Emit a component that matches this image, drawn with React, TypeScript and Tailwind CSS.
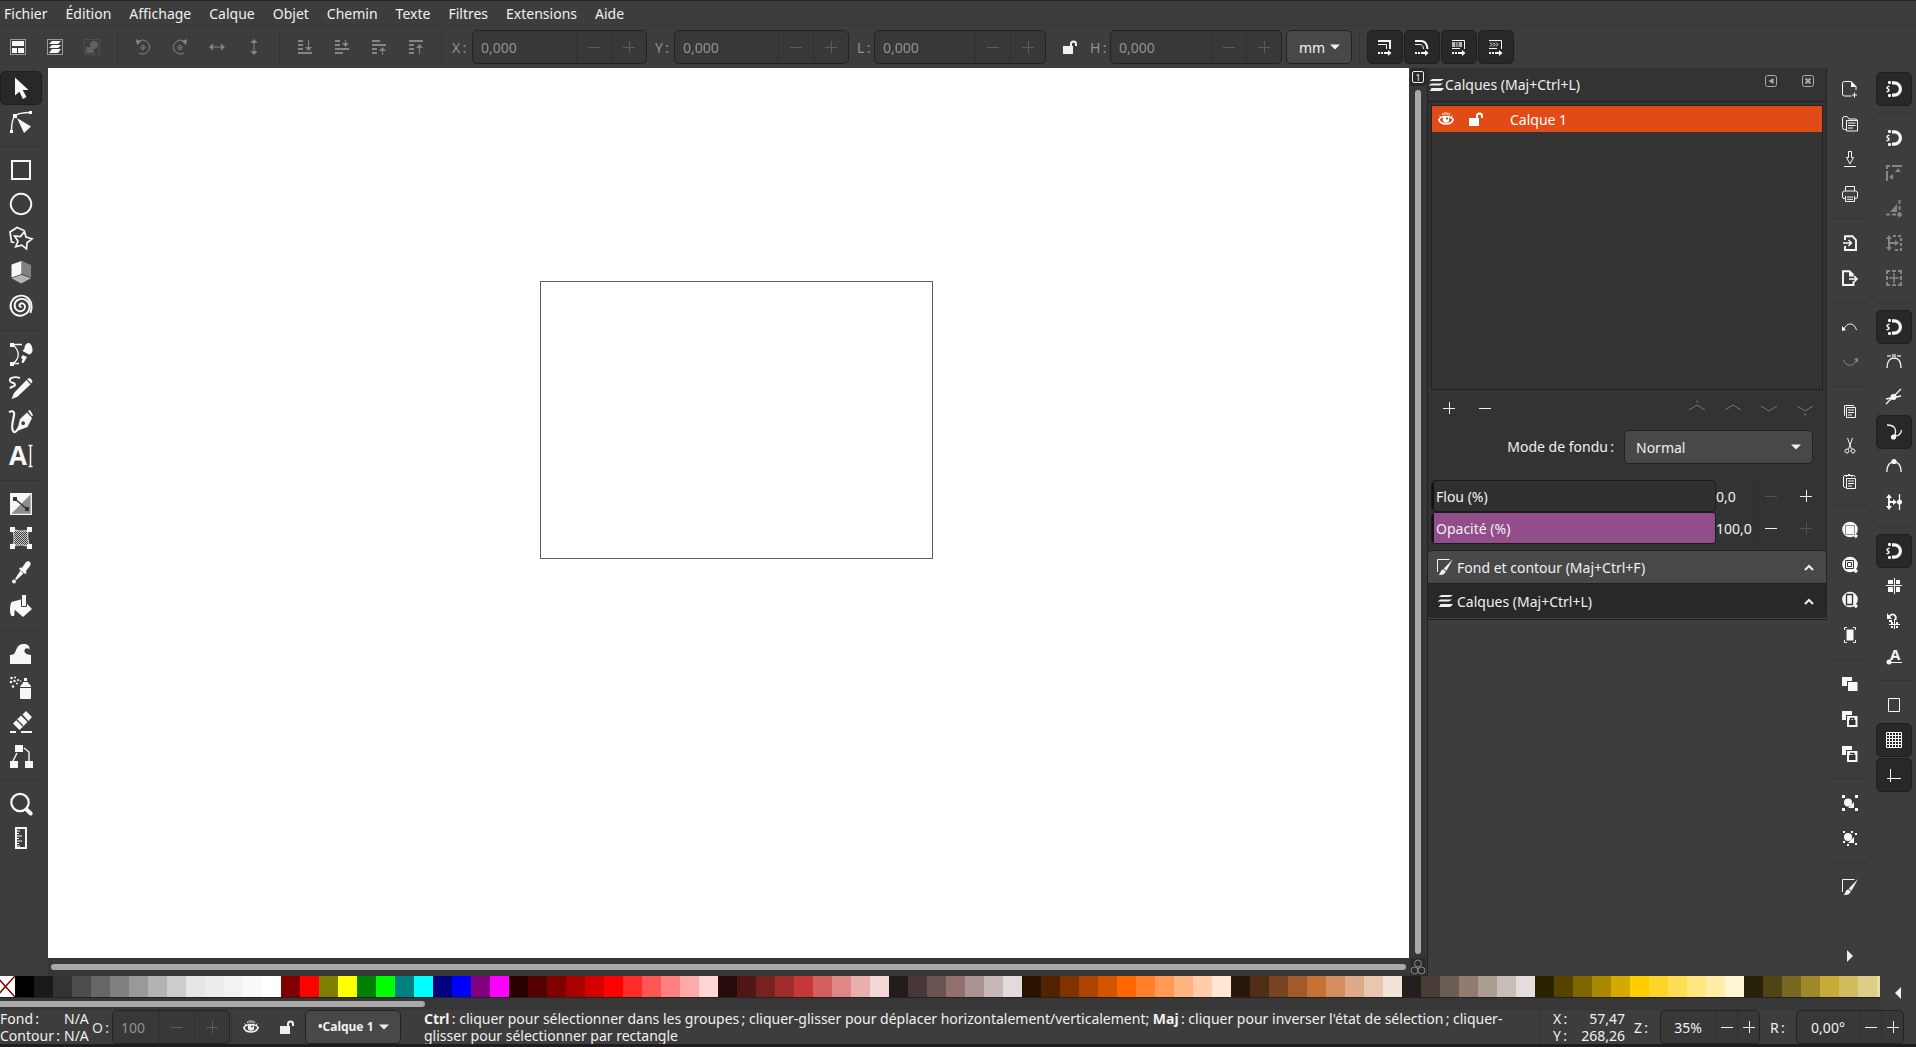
import { useState, type ReactNode } from "react";

const menus = ["Fichier", "Édition", "Affichage", "Calque", "Objet", "Chemin", "Texte", "Filtres", "Extensions", "Aide"];

const palette =
  "000000 1a1a1a 333333 4d4d4d 666666 808080 999999 b3b3b3 cccccc e6e6e6 ececec f2f2f2 f9f9f9 ffffff 800000 ff0000 808000 ffff00 008000 00ff00 008080 00ffff 000080 0000ff 800080 ff00ff 2b0000 550000 800000 aa0000 d40000 ff0000 ff2a2a ff5555 ff8080 ffaaaa ffd5d5 280b0b 501616 782121 a02c2c c83737 d35f5f de8787 e9afaf f4d7d7 241c1c 483737 6c5353 916f6f ac9393 c8b7b7 e3dbdb 2b1100 552200 803300 aa4400 d45500 ff6600 ff7f2a ff9955 ffb380 ffccaa ffe6d5 28170b 502d16 784421 a05a2c c87137 d38d5f deaa87 e9c6af f4e3d7 241f1c 483e37 6c5d53 917c6f ac9d93 c8beb7 e3dedb 2b2200 554400 806600 aa8800 d4aa00 ffcc00 ffd42a ffdd55 ffe680 ffeeaa fff6d5 28220b 504416 786721 a0892c c8ab37 d3bc5f decd87 e9ddaf".split(" ");

type Tool = { label: string; icon: ReactNode; on?: boolean; off?: boolean } | null;

// 16px drawings for the bars, 24px ones for the toolbox
function Svg({ size = 16, children }: { size?: number; children: ReactNode }) {
  return (
    <svg width={size} height={size} viewBox={`0 0 ${size} ${size}`} fill="currentColor" className="shrink-0 overflow-visible" aria-hidden="true">
      {children}
    </svg>
  );
}

const line = { fill: "none", stroke: "currentColor" };

const Lock = () => (
  <Svg>
    <path d="M1 7h10v8H1z" />
    <path {...line} strokeWidth="2" d="M9 8V5a2.5 2.5 0 0 1 5 0v2" />
  </Svg>
);

const Eye = () => (
  <Svg>
    <path {...line} strokeWidth="1.6" d="M.8 8.6C3 4.4 13 4.4 15.200 8.600 13 14.400 3 14.400 .8 8.600z" />
    <circle cx="8" cy="8.500" r="3.200" />
    <circle cx="9" cy="7.500" r="1" fill="#444" />
    <path {...line} d="M1.500 4.500l1.500 1.700M4.200 2.500l1 2M8 1.200v2.500M11.800 2.500l-1 2M14.500 4.500L13 6.200M6 1.500l.3 2M10 1.500l-.3 2" />
  </Svg>
);

const Layers = () => (
  <Svg>
    <path d="M5 2h11c-2 1-2 2-4 2H1.500C3.500 3 3 2 5 2zM4 6.500h11c-2 1-2 2-4 2H.5c2-1 1.500-2 3.500-2zM4 11h12c-1 1.500-2 3-4 3H1.500l1-1C3.500 12.500 2.500 11 4 11z" />
  </Svg>
);

const FillStroke = () => (
  <Svg>
    <path {...line} d="M12.500 .5H.5v12.500" />
    <path d="M16 0L6.800 9.500l2.500 2.500zM6.300 10.200l2.400 2.300C8 15.500 4.500 16 1.500 16c2.500-1.500 1.500-5 4.800-5.800z" />
  </Svg>
);

const Magnet = () => (
  <Svg>
    <path {...line} strokeWidth="3.200" d="M6 1.800h2.200a6.200 6.200 0 0 1 0 12.400H6" />
    <rect x="2" y="0" width="3" height="3" rx="1" />
    <rect x="2" y="13" width="3" height="3" rx="1" />
    <path {...line} strokeWidth="1.400" d="M3.500 5.200C0 5.500 .8 7.800 2 8c1.600.4 1.600 2.500-1.500 2.800" />
  </Svg>
);

const Caret = () => (
  <svg width="10" height="6" viewBox="0 0 10 6" fill="currentColor" className="pointer-events-none" aria-hidden="true">
    <path d="M0 .5h10L5 5.500z" />
  </svg>
);

const Chevron = () => (
  <svg width="10" height="7" viewBox="0 0 10 7" fill="none" stroke="currentColor" strokeWidth="2" aria-hidden="true">
    <path d="M1 6l4-4 4 4" />
  </svg>
);

const Stroke24 = ({ d, w = 2 }: { d: string; w?: number }) => <Svg size={24}><path {...line} strokeWidth={w} d={d} /></Svg>;
const Bar16 = ({ d, s }: { d?: string; s?: string }) => (
  <Svg>
    {d && <path d={d} />}
    {s && <path {...line} d={s} />}
  </Svg>
);

const toolbox: Tool[] = [
  { label: "Sélecteur", on: true, icon: <Svg size={24}><path d="M6 1.500L19.500 14h-5.800l3.800 7-3.600 2-3.500-7.200L6 19.500z" /></Svg> },
  {
    label: "Nœuds",
    icon: (
      <Svg size={24}>
        <path {...line} strokeWidth="1.400" d="M2.500 21.500C2.500 13 3 9 6 6S14 2.500 21.500 2.500" />
        <path d="M4 4h4v4H4zM20 1h3v3h-3zM1 20h3v3H1zM8 8l14 8.500L15 23z" />
      </Svg>
    ),
  },
  null,
  { label: "Rectangle", icon: <Stroke24 d="M3 3h18v18H3z" /> },
  { label: "Ellipse", icon: <Stroke24 d="M12 1.800a10.200 10.200 0 1 0 .01 0z" /> },
  { label: "Étoile", icon: <Stroke24 w={1.700} d="M15 4.500L8 1.500 1 6l1.500 10 3 .5M15.500 5.500l1.500 5.500 6 1.800-5 4-.5 6-4.800-3.700-6 1.700 2.300-5.800L5.500 10l6 .5z" /> },
  {
    label: "Boîte 3D",
    icon: (
      <Svg size={24}>
        <path d="M2.500 4.500L12.500 1v13L2.500 17.500z" />
        <path fill="#808080" d="M13 1l9 4v12.500L13 14z" />
        <path fill="#b4b4b4" d="M2.500 18.300l10-3.600 9.500 3.600-9.800 5.200z" />
      </Svg>
    ),
  },
  { label: "Spirale", icon: <Stroke24 w={1.900} d="M12.500 12.500c-1.500 1-3-1-1.500-2.500 2.500-1.800 5.500.5 5 3.300-.5 3.500-4.500 5-7.500 3.200-4-2.500-3.800-8.500.5-10.700 5-2.500 11 .5 11.500 6.200.4 6.500-5.500 10.500-11 9.500-6-1-9.500-7.500-7.300-13C4.500 2.500 11.500 0 17 2.800c5.500 3 7 9.700 4.500 16.200" /> },
  null,
  {
    label: "Stylo Bézier",
    icon: (
      <Svg size={24}>
        <path d="M1 1h4v4H1zM1 20h4v4H1zM15.500 6.500C15.500 3 18 .5 20 1s3.500 4 3.500 7-2.500 4.500-3.500 4.500l-6.500-3.500zM13.500 13l4.500 2-3.500 6-2-.5 1-3.500-1.500-1z" />
        <path {...line} strokeWidth="1.300" d="M4 2.500h9M4 3c7 6 7 13 0 18.500h6" />
      </Svg>
    ),
  },
  {
    label: "Crayon",
    icon: (
      <Svg size={24}>
        <path {...line} strokeWidth="1.900" d="M11 2C5 0 0 2 1 5c1 2.500 5 1 5 4 0 2-4 1-5 3.500" />
        <path d="M17.500 4l4 4.500L8 21l-5.500 2L5 17zM19 2.500c2-1.500 5.500 2 4 4L22.300 7.500 18.200 3.300z" />
      </Svg>
    ),
  },
  {
    label: "Plume calligraphique",
    icon: (
      <Svg size={24}>
        <path {...line} strokeWidth="2.200" d="M0 2c5-2 6 0 4.500 6C3 14 2 20 5 22c2 .5 3.500-2 5-5" />
        <path fillRule="evenodd" d="M8 21l3-12 7-6.500L23 8l-4.500 9zM15 11.500a1.900 1.900 0 1 0-.1 3.500 1.900 1.900 0 0 0 .1-3.500zM19 1l2-1 3 5-1 1.500z" />
      </Svg>
    ),
  },
  {
    label: "Texte",
    icon: (
      <Svg size={24}>
        <text x="0" y="21" className="font-['Open_Sans',sans-serif] text-[26px] font-bold">A</text>
        <path {...line} strokeWidth="1.500" d="M21.500 2v20M19.500 1.500h4M19.500 22.500h4" />
      </Svg>
    ),
  },
  null,
  {
    label: "Dégradé",
    icon: (
      <Svg size={24}>
        <path fill="#8c8c8c" d="M2 2h20v20H2z" />
        <path d="M2 2h20L2 22z" />
        <path {...line} strokeWidth="1.300" d="M1.700 1.700h20.600v20.600H1.700z" />
        <path fill="#333" d="M4 5h4v4H4zM16 15h4v4h-4z" />
        <path stroke="#333" strokeWidth="1.500" d="M6 7l12 10" />
      </Svg>
    ),
  },
  {
    label: "Filet",
    icon: (
      <Svg size={24}>
        <defs>
          <pattern id="mesh" width="2" height="2" patternUnits="userSpaceOnUse">
            <path fill="#c8c8c8" d="M0 0h1v1H0zM1 1h1v1H1z" />
          </pattern>
        </defs>
        <path fill="url(#mesh)" stroke="currentColor" strokeWidth=".8" d="M4 3c6 3 10 2 16 1-3 6 0 10 0 17-6-3-11-2-17-1 4-6 1-11 1-17z" />
        <path d="M1 1h5v5H1zM18 1h5v5h-5zM1 18h5v5H1zM18 18h5v5h-5z" />
      </Svg>
    ),
  },
  {
    label: "Pipette",
    icon: (
      <Svg size={24}>
        <path d="M17 2c3-2 6 1 4 4l-4 5 .5 2-1.500 1-6-5 1-1.500 2 .2zM11.500 10.500l3 3L7.500 20l-1.500-1z" />
        <circle cx="5" cy="21.500" r="2" />
      </Svg>
    ),
  },
  {
    label: "Remplissage",
    icon: (
      <Svg size={24}>
        <path d="M2.500 22c-2-2-2-11 0-14l11-3L23 15l-9 8-8-7c-1 1 0 5-1 6z" />
        <path stroke="#3d3d3d" d="M12.500 .5h5v12h-5z" />
      </Svg>
    ),
  },
  null,
  { label: "Ajuster", icon: <Svg size={24}><path d="M1 22v-9c5 0 5-3 6.500-6C9 3 12 1.500 16 2c3.500.5 5 3 4.500 5.500-2-2-4.500-1.500-5 .8C15 11 18 13 22 13v9z" /></Svg> },
  {
    label: "Aérosol",
    icon: (
      <Svg size={24}>
        <path d="M11 11c1-3 3-3 3-5h5c0 2 3 2 3 5zM11 12h11v10q0 1-1 1h-9q-1 0-1-1zM15 2h3v3h-3z" />
        <circle cx="2.500" cy="2" r="1.300" />
        <circle cx="6" cy="1.500" r="1" />
        <circle cx="2" cy="6" r="1.300" />
        <circle cx="5.500" cy="5" r="1.200" />
        <circle cx="9" cy="4" r="1.100" />
        <circle cx="11.500" cy="5" r=".8" />
        <circle cx="8" cy="7.500" r="1" />
        <circle cx="4" cy="10.500" r="1.300" />
      </Svg>
    ),
  },
  { label: "Gomme", icon: <Svg size={24}><path d="M13.500 4.500L17 1l6 6-3.500 4zM4 13.500l8-8 6.500 6.500-8 8zM1 21h6v2H1zM12 21h11v2H12z" /><path stroke="#3d3d3d" strokeWidth="1.300" d="M7.500 9.500L14 16" /></Svg> },
  {
    label: "Connecteur",
    icon: (
      <Svg size={24}>
        <path d="M6 1h8v7H6zM1 17h8v7H1zM16 17h8v7h-8z" />
        <path {...line} strokeWidth="1.400" d="M8 9l-4 8M15 4l5 4v9" />
      </Svg>
    ),
  },
  null,
  { label: "Zoom", icon: <Svg size={24}><circle {...line} cx="11" cy="10.500" r="8.700" strokeWidth="2.200" /><path {...line} strokeWidth="4" strokeLinecap="round" d="M17.500 17.500l4.200 4" /></Svg> },
  { label: "Mesure", icon: <Svg size={24}><path {...line} strokeWidth="2" d="M7 2h10v20H7z" /><path {...line} d="M8 5h3M8 7.500h2M8 10h5M8 12.500h2M8 15h5M8 17.500h2M8 20h3" /></Svg> },
];

const commands: Tool[] = [
  { label: "Nouveau", icon: <Bar16 s="M9.500 15H2.500Q.5 15 .5 13V2.500Q.5 .5 2.500 .5H9l5 5V9M12.500 11.500v5M10 14h5" d="M9 0l5.500 6H9z" /> },
  { label: "Ouvrir", icon: <Bar16 s="M4 13.500H2.500Q.5 13.500 .5 11.500V3q0-2.500 2-2.500H5L7 3h6q2.500 0 2.500 2M4.500 4.500h11v10.500h-11zM6 7h7.500M6 9.500h7.500M6 12h5" /> },
  { label: "Enregistrer", icon: <Bar16 s="M6.500 .5h3v6h2L8 13 4.500 6.500h2zM2 15.500h12" /> },
  { label: "Imprimer", icon: <Bar16 s="M3.500 5V.5h9V5M3 12.500Q.5 13 .5 11V7q0-2 2-2h11q2 0 2 2v4q0 2-2.500 1.500M3.500 10v5.500h9V10M5 11h6M5 13.300h6" /> },
  null,
  { label: "Importer", icon: <Svg><path {...line} strokeWidth="1.900" d="M3 5V1.200h7.500L14 5v10H3v-4" /><path {...line} strokeWidth="1.400" d="M1 8h8M6.500 5l3 3-3 3" /></Svg> },
  { label: "Exporter", icon: <Svg><path {...line} strokeWidth="1.900" d="M11.500 11.500V15H1V1.200h6.500l4 4" /><path d="M7 1l5 5.500H7z" /><path {...line} strokeWidth="1.600" d="M7 9h8M12 6l3 3-3 3" /></Svg> },
  null,
  { label: "Annuler", icon: <Bar16 s="M1.500 10.500C5 3 12 3 14.500 11" d="M0 12V7l4 4z" /> },
  { label: "Rétablir", off: true, icon: <Bar16 s="M1.500 6C4 13 11 13 14.500 6.500" d="M16 4v5l-4-4z" /> },
  null,
  { label: "Copier", icon: <Bar16 s="M3 12.500H2.500V2.500h9v1M4.500 4.500h9v10h-9zM6 7h6M6 9.500h6M6 12h4" /> },
  { label: "Couper", icon: <Bar16 s="M5.500 0l4 11M10.500 0l-4 11M5 11a2 2 0 1 0 .01 0zM11 11a2 2 0 1 0 .01 0z" /> },
  { label: "Coller", icon: <Bar16 s="M3.500 14.500Q1.500 14.500 1.500 13V4Q1.500 2.500 3 2.500h8.500q1.500 0 1.500 1.500M4.500 4V2.500h1.200Q7-.5 8.500 2.500H10V4M4.500 5.500h9v10h-9zM6 8h6M6 10.500h6M6 13h4" /> },
  null,
  { label: "Zoom sélection", icon: <Svg><circle cx="8" cy="7.500" r="7.800" /><path {...line} strokeWidth="3" d="M11.500 12l3.500 3" /><path fill="none" stroke="#333" strokeDasharray="1 1" d="M3.500 3.500h9v9h-9z" /></Svg> },
  { label: "Zoom dessin", icon: <Svg><circle cx="8" cy="7.500" r="7.800" /><path {...line} strokeWidth="3" d="M11.500 12l3.500 3" /><path fill="none" stroke="#333" d="M3.500 3.500h8v8h-8zM5.500 5.500h4v4h-4z" /></Svg> },
  { label: "Zoom page", icon: <Svg><circle cx="8" cy="7.500" r="7.800" /><path {...line} strokeWidth="3" d="M11.500 12l3.500 3" /><path fill="none" stroke="#333" strokeWidth="1.300" d="M4.500 2.500h6v10h-6z" /></Svg> },
  { label: "Centrer la page", icon: <Bar16 s="M2.500 3V.5H5M11 .5h2.500V3M2.500 13v2.500H5M11 15.500h2.500V13" d="M4.500 2.500h7v11h-7z" /> },
  null,
  { label: "Dupliquer", icon: <Svg><path d="M0 1h10v4H5v5H0z" /><path d="M6 6h9.500v9H6z" /></Svg> },
  { label: "Cloner", icon: <Svg><path d="M0 0h10v4H4v5H0z" /><path d="M5 5h10.500v11H5z" /><path fill="#333" d="M7 9h6.500v5H7z" /><path fill="none" stroke="#333" strokeWidth="1.300" d="M8.500 9V7.500h3.300V9" /></Svg> },
  { label: "Délier le clone", icon: <Svg><path d="M0 0h10v4H4v5H0z" /><path d="M5 5h10.500v11H5z" /><path fill="#333" d="M7 9h6.500v5H7z" /><path fill="none" stroke="#333" strokeWidth="1.300" d="M8 7.500h4V9" /></Svg> },
  null,
  { label: "Grouper", icon: <Svg><path d="M0 0h3v3H0zM13 0h3v3h-3zM0 13h3v3H0zM13 13h3v3h-3zM12 7v6H6z" /><circle cx="6" cy="7.500" r="4" /></Svg> },
  { label: "Dégrouper", icon: <Svg><path d="M1 1h2v2H1zM9 1h2v2H9zM13 3h2v2h-2zM1 11h2v2H1zM5 14h2v2H5zM13 13h2v2h-2zM12 7v6H6z" /><circle cx="6" cy="7" r="4" /></Svg> },
  null,
  { label: "Fond et contour", icon: <FillStroke /> },
];

const snaps: Tool[] = [
  { label: "Activer le magnétisme", on: true, icon: <Magnet /> },
  null,
  { label: "Boîtes englobantes", icon: <Magnet /> },
  { label: "Côtés des boîtes", off: true, icon: <Svg><path {...line} strokeWidth="2" d="M6 1h10M1 6v10M0 1h4M1 0v4" /><path d="M9 7h6l-3-4zM3 12l4-3v6z" /></Svg> },
  { label: "Coins des boîtes", off: true, icon: <Svg><path {...line} strokeWidth="2" strokeDasharray="4 2" d="M0 14.500h12M13.500 0v12" /><path d="M4 12l7-8v8zM13.500 11.500l3 3-3 3-3-3z" /></Svg> },
  { label: "Milieux des côtés", off: true, icon: <Svg><path {...line} strokeWidth="2" d="M3 2v12M3 8h8" /><path d="M0 4l3-4 3 4zM0 12l3 4 3-4zM9 5l4 3-4 3z" /><path {...line} strokeWidth="2" strokeDasharray="3 2" d="M7 1h8v14H7" /></Svg> },
  { label: "Centres des boîtes", off: true, icon: <Svg><path {...line} strokeWidth="2" d="M1 4V1h3M6 1h4M12 1h3v3M15 6v4M15 12v3h-3M10 15H6M4 15H1v-3M1 10V6" /><path {...line} strokeWidth="1.500" d="M8 3v10M3 8h10" /></Svg> },
  null,
  { label: "Nœuds et chemins", on: true, icon: <Magnet /> },
  { label: "Nœuds", icon: <Svg><path {...line} d="M1 14C1 7 4 4 8 4s7 3 7 10" strokeWidth="1.300" /><path fill="#aaa" d="M6 0h4v4H6zM1 1h4v2H1zM11 1h4v2h-4z" /></Svg> },
  { label: "Intersections", icon: <Svg><path {...line} d="M0 15L15 0M0 10l15-3" strokeWidth="1.300" /><circle cx="7.500" cy="8" r="3" /></Svg> },
  { label: "Nœuds doux", on: true, icon: <Svg><path {...line} strokeWidth="1.300" d="M1 1c7 0 11 4 7 12M9 12c4 0 6-2 6.500-6" /><circle cx="7.500" cy="13" r="2.600" /></Svg> },
  { label: "Points de rebroussement", icon: <Svg><path {...line} strokeWidth="1.300" d="M.8 13C1 6 4 3 8 3s7 3 7.200 10" /><circle cx="8" cy="2.500" r="2.600" /></Svg> },
  { label: "Milieux de segments", icon: <Svg><path {...line} strokeWidth="2" d="M3 2v12M3 8h5" /><path d="M0 4l3-4 3 4zM0 12l3 4 3-4zM7 5l4 3-4 3z" /><path {...line} strokeWidth="1.300" d="M13.500 0v16" /><circle cx="13.500" cy="8" r="2.500" /></Svg> },
  null,
  { label: "Autres points", on: true, icon: <Magnet /> },
  { label: "Centres d'objets", icon: <Svg><path d="M2 2h5v4H2zM10 2h4v4h-4zM2 9h5v5H2zM10 9h4v5h-4z" /><path {...line} d="M8.500 0v16M0 7.500h16" /></Svg> },
  { label: "Centres de rotation", icon: <Svg><path {...line} strokeWidth="1.800" d="M3 4c3-5 8-2 6.500 3" /><path d="M1 0v6h5zM3 7h3v2H3z" /><path {...line} d="M8.500 6v10M3 11.500h11" /><path d="M5 9h2v2H5zM10 9h2v2h-2zM5 13h2v2H5zM10 13h2v2h-2z" /></Svg> },
  { label: "Lignes de base du texte", icon: <Svg><text x="4" y="12" className="font-['Open_Sans',sans-serif] text-[15px] font-bold">A</text><path {...line} d="M4 14.500h12" /><circle cx="3" cy="14" r="2.500" /></Svg> },
  null,
  { label: "Bordure de page", icon: <Bar16 s="M2.500 1.500h11v13h-11z" /> },
  { label: "Grilles", on: true, icon: <Bar16 s="M.5 .5h15v15H.5zM3.500 0v16M6.500 0v16M9.500 0v16M12.500 0v16M0 3.500h16M0 6.500h16M0 9.500h16M0 12.500h16" /> },
  { label: "Guides", on: true, icon: <Bar16 s="M4.500 2v13M1 11.500h14" /> },
];

const selectionTools: Tool[] = [
  { label: "Tout sélectionner", icon: <Svg><path {...line} strokeDasharray="1 1" d="M.5 .5h15v15H.5z" /><path d="M2 2h12v5H2zM2 9h5v5H2zM8 9h6v5H8z" /></Svg> },
  { label: "Tout sélectionner dans les calques", icon: <Svg><path {...line} strokeDasharray="1 1" d="M.5 .5h15v15H.5z" /><path d="M5 2h9l-3 3H2zM5 6h9l-3 3H2zM5 10h9l-3 4H2z" /></Svg> },
  { label: "Désélectionner", off: true, icon: <Svg><g opacity=".5"><path {...line} strokeDasharray="1 1" d="M.5 .5h15v15H.5z" /><circle cx="10" cy="6" r="4" /><path d="M2 8h4l4 3v3H2z" /></g></Svg> },
  null,
  { label: "Tourner à gauche", off: true, icon: <Bar16 s="M2.500 3.500C8-2 15 3 14.500 8.500S8 16.500 4 14M8 6.500a2 2 0 1 0 .01 0z" d="M1 0l1 6 4-3.500zM7.500 8h1.500v1.500H7.500z" /> },
  { label: "Tourner à droite", off: true, icon: <Bar16 s="M13.500 3.500C8-2 1 3 1.500 8.500S8 16.500 12 14M8 6.500a2 2 0 1 0 .01 0z" d="M15 0l-1 6-4-3.500zM7.500 8h1.500v1.500H7.500z" /> },
  { label: "Retourner horizontalement", off: true, icon: <Bar16 s="M2 8h12" d="M0 8l4-3.500v7zM16 8l-4-3.500v7z" /> },
  { label: "Retourner verticalement", off: true, icon: <Bar16 s="M8 2v12" d="M8 0L4.500 4h7zM8 16l-3.500-4h7z" /> },
  null,
  { label: "Descendre au fond", off: true, icon: <Bar16 s="M11.500 1v9" d="M1 1h5v2H1zM1 5h5v2H1zM1 9h5v2H1zM1 13h14v2H1zM8 8h7l-3.500 4z" /> },
  { label: "Descendre", off: true, icon: <Bar16 s="M11.500 1v5" d="M1 1h5v2H1zM1 5h5v2H1zM1 9h14v2H1zM1 13h8v2H1zM8 4h7l-3.500 4z" /> },
  { label: "Monter", off: true, icon: <Bar16 s="M11.500 10v6" d="M1 1h8v2H1zM1 5h14v2H1zM1 9h5v2H1zM1 13h5v2H1zM8 12h7l-3.500-4z" /> },
  { label: "Monter au premier plan", off: true, icon: <Bar16 s="M11.500 7v8" d="M1 1h14v2H1zM1 5h5v2H1zM1 9h5v2H1zM1 13h5v2H1zM8 9h7l-3.500-4z" /> },
  null,
];

const Dashes = () => <path d="M1 13h2v2H1zM4 13h2v2H4zM7 13h4v-2l3.500 3-3.500 3v-2H7z" />;

const scaleTools: Tool[] = [
  { label: "Épaisseur du contour", on: true, icon: <Svg><path {...line} strokeWidth="2" d="M1 2h12v8" /><path {...line} d="M1 5.500h8.500V10" /><Dashes /></Svg> },
  { label: "Rayons des coins", on: true, icon: <Svg><path {...line} strokeWidth="2" d="M1 2h6c4 0 6 2 6.500 8" /><path {...line} d="M1 5.500h5c2 0 3 1 3.500 4.500" /><Dashes /></Svg> },
  { label: "Dégradés", on: true, icon: <Svg><path {...line} d="M1 1.500h12.500V10M1 9.500h8" /><path {...line} strokeWidth="5" strokeDasharray="3 .7 1 .7 1 .7" d="M1 5.500h10" opacity=".7" /><Dashes /></Svg> },
  { label: "Motifs", on: true, icon: <Svg><path {...line} d="M1 1.500h12.500V10M1 9.500h8M2 3.500l2 2-2 2M5 3.500l2 2-2 2M8 3.500l2 2-2 2" /><Dashes /></Svg> },
];

const Plus = () => <svg width="12" height="12" viewBox="0 0 12 12" stroke="currentColor" aria-hidden="true"><path d="M0 6.500h12M6.500 0v12" /></svg>;
const Minus = () => <svg width="12" height="12" viewBox="0 0 12 12" stroke="currentColor" aria-hidden="true"><path d="M0 6.500h12" /></svg>;

function ToolButton({ tool, width }: { tool: NonNullable<Tool>; width: string }) {
  return (
    <button
      type="button"
      aria-label={tool.label}
      aria-pressed={tool.on}
      disabled={tool.off}
      className={`flex h-[34px] shrink-0 items-center justify-center rounded-[5px] border ${width} ${
        tool.on ? "border-[#1f1f1f] bg-[#282828]" : "border-transparent"
      } ${tool.off ? "text-[#858585]" : "text-[#f7f7f7]"}`}
    >
      {tool.icon}
    </button>
  );
}

function Column({ tools, className, width, gap }: { tools: Tool[]; className: string; width: string; gap: string }) {
  return (
    <div className={`flex flex-col ${className}`}>
      {tools.map((tool, i) =>
        tool ? (
          <ToolButton key={i} tool={tool} width={width} />
        ) : (
          <div key={i} className={`flex items-center ${gap} ${width}`}>
            <hr className="w-full border-[#343434]" />
          </div>
        ),
      )}
    </div>
  );
}

function Row({ tools }: { tools: Tool[] }) {
  return (
    <div className="flex items-center gap-px">
      {tools.map((tool, i) =>
        tool ? <ToolButton key={i} tool={tool} width="w-9" /> : <div key={i} className="mx-1.5 h-[34px] w-px bg-[#373737]" />,
      )}
    </div>
  );
}

type SpinProps = { id: string; label: string; value: string; width: string; button?: string; labelClass: string; disabled?: boolean; center?: boolean };

function Spin({ id, label, value, width, button = "w-[35px]", labelClass, disabled, center }: SpinProps) {
  const tone = disabled ? "text-[#929292]" : "text-[#f0f0f0]";
  const sign = `flex h-full shrink-0 items-center justify-center border-l border-[#303030] ${button} ${disabled ? "text-[#5c5c5c]" : ""}`;
  return (
    <div className={`flex shrink-0 items-center ${tone}`}>
      <label htmlFor={id} className={`whitespace-nowrap ${labelClass}`}>{label}{"\u202f"}:</label>
      <div className={`flex h-[34px] items-center rounded-[5px] border border-[#232323] bg-[#383838] ${width}`}>
        <input id={id} defaultValue={value} disabled={disabled} className={`h-full min-w-0 flex-1 bg-transparent outline-none ${center ? "text-center" : "px-2"}`} />
        <button type="button" aria-label={`${label} moins`} disabled={disabled} className={sign}><Minus /></button>
        <button type="button" aria-label={`${label} plus`} disabled={disabled} className={sign}><Plus /></button>
      </div>
    </div>
  );
}

function PercentRow({ id, label, initial }: { id: string; label: string; initial: number }) {
  const [value, setValue] = useState(initial);
  return (
    <div className="flex h-8 items-center">
      <div className="relative flex h-full flex-1 items-center overflow-hidden rounded-[4px] border border-[#1c1c1c] bg-[#303030]">
        <div className="absolute inset-y-0 left-0 border-l-2 border-[#180f18] bg-[#924d8b]" style={{ width: `${value}%` }} />
        <label htmlFor={id} className="relative px-1">{label}</label>
        <input id={id} type="range" min="0" max="100" value={value} onChange={(e) => setValue(Number(e.target.value))} className="absolute inset-0 w-full opacity-0" />
      </div>
      <output htmlFor={id} className="w-[37px]">{value.toFixed(1).replace(".", ",")}</output>
      <button type="button" aria-label={`${label} moins`} disabled={value === 0} className="flex h-full w-[35px] items-center justify-center border-l border-[#303030] disabled:text-[#525252]" onClick={() => setValue(value - 1)}>
        <Minus />
      </button>
      <button type="button" aria-label={`${label} plus`} disabled={value === 100} className="flex h-full w-[35px] items-center justify-center border-l border-[#303030] disabled:text-[#525252]" onClick={() => setValue(value + 1)}>
        <Plus />
      </button>
    </div>
  );
}

function LayersPanel() {
  return (
    <aside className="flex w-[400px] shrink-0 flex-col border-l border-[#222]">
      <section className="border-r border-[#242424] bg-[#333]">
        <header className="flex h-[33px] items-center gap-px pr-3">
          <Layers />
          <h2 className="flex-1">Calques (Maj+Ctrl+L)</h2>
          <button type="button" aria-label="Iconifier" className="mr-6 mb-2 text-[#aaa]">
            <svg width="12" height="12" viewBox="0 0 12 12" aria-hidden="true"><rect x=".5" y=".5" width="11" height="11" rx="2" fill="none" stroke="currentColor" /><path d="M8.500 3v6l-5-3z" fill="currentColor" /></svg>
          </button>
          <button type="button" aria-label="Fermer" className="mb-2 text-[#aaa]">
            <svg width="12" height="12" viewBox="0 0 12 12" fill="none" stroke="currentColor" aria-hidden="true"><rect x=".5" y=".5" width="11" height="11" rx="2" /><path d="M3.500 3.500l5 5M8.500 3.500l-5 5" strokeWidth="2" /></svg>
          </button>
        </header>
        <div className="border-t border-[#222] px-[3px] pt-[3px]">
          <ul className="h-[285px] border border-[#222]">
            <li className="flex h-[26px] items-center bg-[#e04b18] text-white">
              <button type="button" aria-label="Visibilité" className="ml-1.5"><Eye /></button>
              <button type="button" aria-label="Verrouiller" className="ml-3.5"><Lock /></button>
              <span className="ml-[26px]">Calque 1</span>
            </li>
          </ul>
          <div className="flex h-9 items-center">
            <button type="button" aria-label="Ajouter un calque" className="flex w-9 justify-center"><Plus /></button>
            <button type="button" aria-label="Supprimer le calque" className="flex w-9 justify-center"><Minus /></button>
            <div className="ml-auto flex text-[#747474]">
              {["M0 10l8-5 8 5M7.500 1h1.500M7.500 2h1.500", "M0 10l8-5 8 5", "M0 6l8 5 8-5", "M0 6l8 5 8-5M7.500 14h1.500M7.500 15h1.500"].map((d, i) => (
                <button key={i} type="button" aria-label={["Au premier plan", "Monter", "Descendre", "À l'arrière-plan"][i]} disabled className="flex w-9 justify-center">
                  <Bar16 s={d} />
                </button>
              ))}
            </div>
          </div>
          <div className="flex h-[46px] items-start justify-end gap-2.5 border-b border-[#2f2f2f] pt-1 pr-2.5">
            <label htmlFor="blend" className="leading-[34px]">Mode de fondu{"\u202f"}:</label>
            <div className="relative flex w-[189px] items-center">
              <select id="blend" className="h-[34px] w-full appearance-none rounded-[5px] border border-[#222] bg-[#484848] px-[11px]">
                <option>Normal</option>
              </select>
              <div className="pointer-events-none absolute right-3"><Caret /></div>
            </div>
          </div>
          <div className="pt-2 pb-1.5">
            <PercentRow id="blur" label="Flou (%)" initial={0} />
            <PercentRow id="opacity" label="Opacité (%)" initial={100} />
          </div>
        </div>
        <button type="button" className="flex h-[34px] w-full items-center gap-1 rounded-t-[4px] border-y border-[#222] bg-[#484848] px-[9px] pr-3">
          <FillStroke />
          <span className="flex-1 text-left">Fond et contour (Maj+Ctrl+F)</span>
          <Chevron />
        </button>
        <button type="button" className="flex h-[34px] w-full items-center gap-1 rounded-b-[4px] bg-[#282828] px-[9px] pr-3">
          <Layers />
          <span className="flex-1 text-left">Calques (Maj+Ctrl+L)</span>
          <Chevron />
        </button>
      </section>
      <div className="mt-px border-t border-[#222]" />
    </aside>
  );
}

function Canvas() {
  return (
    <main className="flex min-w-0 flex-1 bg-[#373737]">
      <div className="flex min-w-0 flex-1 flex-col">
        <div className="relative min-h-[600px] flex-1 overflow-hidden bg-white">
          <div className="absolute top-[213px] left-[492px] h-[278px] w-[393px] border border-[#606060]" />
        </div>
        <div className="flex h-[18px] items-center px-[3px]">
          <div className="h-1.5 flex-1 rounded-full bg-[#a9a9a9]" />
        </div>
      </div>
      <div className="flex w-[18px] shrink-0 flex-col items-center">
        <button type="button" aria-label="Échelle" className="flex h-[18px] w-4 items-center justify-center rounded-[3px] bg-[#282828] text-[9px] leading-none">
          <span className="flex h-3 w-3 items-center justify-center rounded-[2px] border border-[#eee]">1</span>
        </button>
        <div className="mt-1 w-1.5 flex-1 rounded-full bg-[#a9a9a9]" />
        <button type="button" aria-label="Gestion des couleurs" className="mt-1 flex h-[18px] w-4 items-center justify-center bg-[#2c2c2c] text-[#8b8b8b]">
          <Svg><g {...line}><circle cx="8" cy="4.500" r="3.500" /><circle cx="4.500" cy="11.500" r="3.500" /><circle cx="11.500" cy="11.500" r="3.500" /></g></Svg>
        </button>
      </div>
    </main>
  );
}

function StatusBar() {
  return (
    <footer className="flex h-[34px] items-center">
      <dl className="grid w-[91px] shrink-0 grid-cols-[64px_27px] leading-[17px] whitespace-nowrap">
        <dt>Fond{"\u202f"}:</dt>
        <dd>N/A</dd>
        <dt>Contour{"\u202f"}:</dt>
        <dd>N/A</dd>
      </dl>
      <Spin id="o" label="O" value="100" width="w-[118px]" labelClass="w-[21px] pl-px text-[#e0e0e0]" disabled />
      <div className="mx-px h-[34px] w-px bg-[#353535]" />
      <button type="button" aria-label="Visibilité du calque" className="flex w-9 justify-center"><Eye /></button>
      <button type="button" aria-label="Verrou du calque" className="flex w-9 justify-center"><Lock /></button>
      <div className="relative flex w-24 shrink-0 items-center">
        <select aria-label="Calque courant" className="h-[34px] w-full appearance-none rounded-[5px] border border-[#222] bg-[#484848] pl-3 text-[12px] font-bold">
          <option>•Calque 1</option>
        </select>
        <div className="pointer-events-none absolute right-3"><Caret /></div>
      </div>
      <p className="min-w-0 flex-1 pr-1 pl-[23px] leading-[17px]">
        <b>Ctrl</b>{"\u202f"}: cliquer pour sélectionner dans les groupes{"\u202f"}; cliquer-glisser pour déplacer horizontalement/verticalement; <b>Maj</b>{"\u202f"}: cliquer pour inverser l'état de sélection{"\u202f"}; cliquer-glisser pour sélectionner par rectangle
      </p>
      <div className="h-[34px] w-px bg-[#353535]" />
      <dl className="grid w-[84px] shrink-0 grid-cols-[24px_48px] pl-3 leading-[17px]">
        <dt>X{"\u202f"}:</dt>
        <dd className="text-right">57,47</dd>
        <dt>Y{"\u202f"}:</dt>
        <dd className="text-right">268,26</dd>
      </dl>
      <Spin id="z" label="Z" value="35%" width="w-[100px]" button="w-[22px]" labelClass="w-[35px] pl-[9px]" center />
      <Spin id="r" label="R" value="0,00°" width="w-[108px]" button="w-[22px]" labelClass="w-9 pl-2.5" center />
      <div className="w-3 shrink-0" />
    </footer>
  );
}

export default function App() {
  return (
    <div className="flex min-h-screen flex-col border-t border-[#262626] bg-[#3d3d3d] font-['Noto_Sans',sans-serif] text-[14px] text-[#f0f0f0]">
      <nav className="flex h-[25px] items-center gap-[18px] border-b border-[#373737] px-1">
        {menus.map((menu) => (
          <a key={menu} href="#">{menu}</a>
        ))}
      </nav>
      <div className="flex h-[42px] items-center">
        <Row tools={selectionTools} />
        <Spin id="x" label="X" value="0,000" width="w-[175px]" labelClass="w-6 pl-1" disabled />
        <Spin id="y" label="Y" value="0,000" width="w-[175px]" labelClass="w-[27px] pl-2" disabled />
        <Spin id="l" label="L" value="0,000" width="w-[172px]" labelClass="w-[25px] pl-2" disabled />
        <button type="button" aria-label="Verrouiller les proportions" className="ml-1.5 flex w-9 justify-center"><Lock /></button>
        <Spin id="h" label="H" value="0,000" width="w-[172px]" labelClass="w-[22px] pl-0.5" disabled />
        <div className="relative ml-1 flex w-[66px] items-center">
          <select aria-label="Unité" className="h-[34px] w-full appearance-none rounded-[5px] border border-[#222] bg-[#484848] pl-3">
            <option>mm</option>
          </select>
          <div className="pointer-events-none absolute right-3"><Caret /></div>
        </div>
        <div className="mx-[7px] h-[34px] w-px bg-[#373737]" />
        <Row tools={scaleTools} />
      </div>
      <div className="flex flex-1">
        <div className="flex min-w-0 flex-1">
          <Column tools={toolbox} className="w-12 shrink-0 pt-[3px]" width="w-[42px]" gap="h-3.5" />
          <Canvas />
          <LayersPanel />
        </div>
        <div className="flex w-[89px] shrink-0">
          <div className="flex flex-col">
            <Column tools={commands} className="gap-px pt-1 pr-1 pl-[5px]" width="w-9" gap="h-[13px]" />
            <button type="button" aria-label="Plus de commandes" className="mt-auto mb-3.5 flex justify-center">
              <svg width="6" height="12" viewBox="0 0 6 12" fill="currentColor" aria-hidden="true"><path d="M0 0l6 6-6 6z" /></svg>
            </button>
          </div>
          <Column tools={snaps} className="gap-px px-1 pt-1" width="w-9" gap="h-[13px]" />
        </div>
      </div>
      <div className="flex">
        <div className="min-w-0 flex-1 overflow-hidden bg-[#373737]">
          <div className="flex border-b border-[#222]">
            <button type="button" aria-label="Aucune" className="h-[21px] w-[15px] shrink-0 bg-white">
              <svg width="15" height="21" viewBox="0 0 15 21" stroke="#780000" strokeWidth="1.500" aria-hidden="true"><path d="M-4 0l19 21M15 0L-4 21" /></svg>
            </button>
            {palette.map((color, i) => (
              <button key={i} type="button" aria-label={`#${color}`} className="h-[21px] w-[19px] shrink-0" style={{ backgroundColor: `#${color}` }} />
            ))}
          </div>
          <div className="h-3 pt-[3px]">
            <div className="h-1.5 w-[425px] rounded-r-full bg-[#a9a9a9]" />
          </div>
        </div>
        <button type="button" aria-label="Options de la palette" className="flex w-9 shrink-0 items-center justify-center">
          <svg width="6" height="12" viewBox="0 0 6 12" fill="currentColor" aria-hidden="true"><path d="M6 0L0 6l6 6z" /></svg>
        </button>
      </div>
      <StatusBar />
      <div className="h-[3px] bg-[#1f1d1f]" />
    </div>
  );
}
